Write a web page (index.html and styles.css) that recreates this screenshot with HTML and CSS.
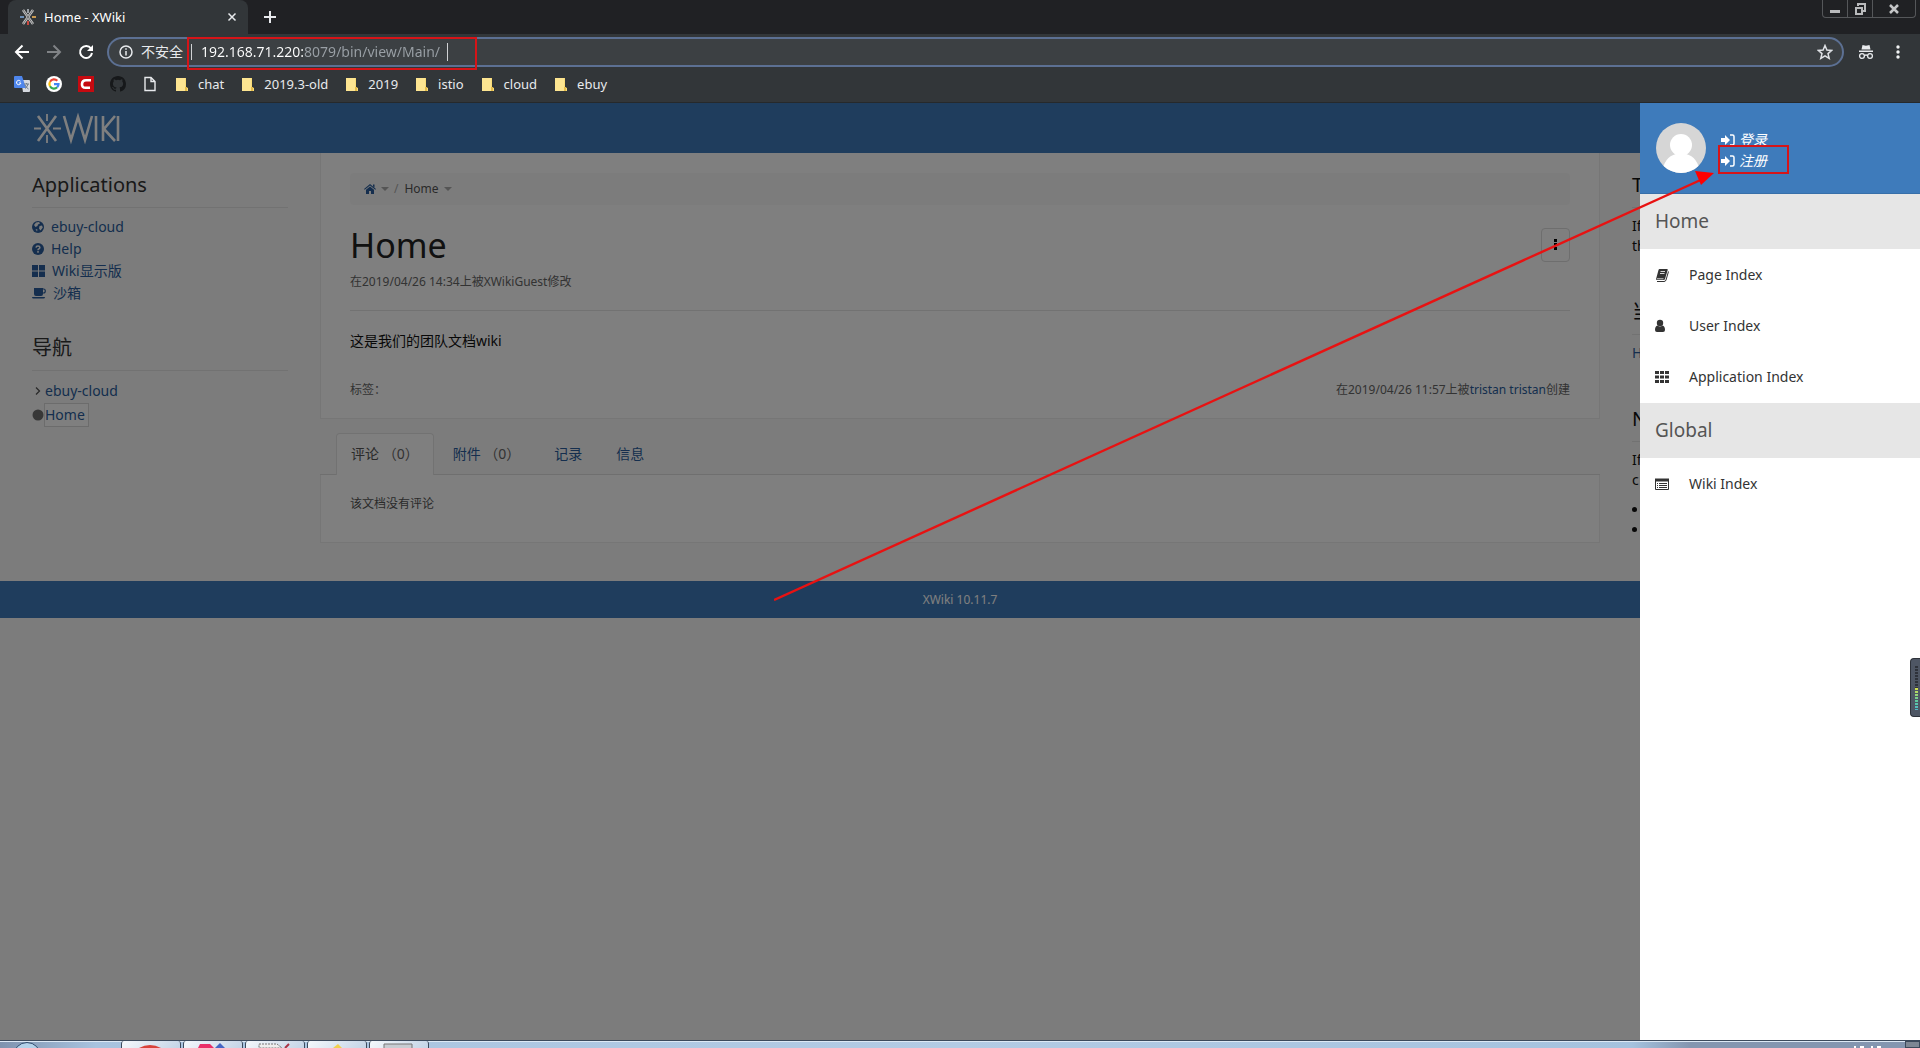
FILE: index.html
```html
<!DOCTYPE html>
<html lang="zh-CN">
<head>
<meta charset="utf-8">
<title>Home - XWiki</title>
<link rel="stylesheet" href="styles.css">
</head>
<body>
<svg class="sprite" aria-hidden="true">
  <symbol id="folder" viewBox="0 0 13 15"><path d="M1 1h10v9l2 1v3H1z" fill="#f9dc78"/><path d="M1 1h9v13H1z" fill="#fde591"/><path d="M10 10h2v4h-2z" fill="#e5bc4a"/></symbol>
  <symbol id="signin" viewBox="0 0 14 12"><path d="M0 4h4V1l5 5-5 5V8H0z" fill="currentColor"/><path d="M9 1h2.500q1.500 0 1.500 1.500v7q0 1.500-1.500 1.500H9" fill="none" stroke="currentColor" stroke-width="1.500"/></symbol>
</svg>

<header class="browser">
  <div class="tabstrip">
    <div class="tab">
      <svg class="favicon" viewBox="0 0 16 16" fill="none" stroke-width="2"><path d="M3 1l10 14M13 1L3 15" stroke="#c4c4c4" stroke-width="2.500"/><path d="M3 1l10 14M13 1L3 15" stroke="#55585b" stroke-width=".8"/><path d="M8 0v4" stroke="#9aa0a6"/><path d="M8 12v4" stroke="#c9483f"/><path d="M0 8h4" stroke="#6c8fb8"/><path d="M12 8h4" stroke="#c99a52"/></svg>
      <span class="tab-title">Home - XWiki</span>
      <button class="tab-close" aria-label="关闭"><svg viewBox="0 0 10 10" stroke="currentColor" stroke-width="1.500"><path d="M1.500 1.500l7 7m0-7l-7 7"/></svg></button>
    </div>
    <button class="new-tab" aria-label="新标签页"><svg viewBox="0 0 12 12" stroke="currentColor" stroke-width="2"><path d="M6 0v12M0 6h12"/></svg></button>
    <div class="window-buttons">
      <button aria-label="最小化"><svg viewBox="0 0 12 12"><path d="M1 7h10v3H1z" fill="#b9babc"/></svg></button>
      <button aria-label="还原"><svg viewBox="0 0 12 12" fill="none" stroke="#b9babc" stroke-width="2"><path d="M4 3V1h7v7H9"/><path d="M2 5h6v6H2z"/></svg></button>
      <button class="close" aria-label="关闭窗口"><svg viewBox="0 0 12 12" stroke="#c4c5c7" stroke-width="2.500"><path d="M2 2l8 8m0-8l-8 8"/></svg></button>
    </div>
  </div>

  <div class="toolbar">
    <button aria-label="后退"><svg viewBox="0 0 16 16" fill="none" stroke="#fff" stroke-width="2"><path d="M15 8H2m6.500-6.500L2 8l6.500 6.500"/></svg></button>
    <button aria-label="前进"><svg viewBox="0 0 16 16" fill="none" stroke="#808386" stroke-width="2"><path d="M1 8h13M7.500 1.500L14 8l-6.500 6.500"/></svg></button>
    <button aria-label="刷新"><svg viewBox="0 0 16 16"><path d="M13 4.500A6 6 0 1 0 14 9" fill="none" stroke="#fff" stroke-width="2"/><path d="M15 1v6H9z" fill="#fff"/></svg></button>
    <form class="omnibox">
      <svg class="info" viewBox="0 0 14 14" fill="none" stroke="#e8eaed" stroke-width="1.500"><circle cx="7" cy="7" r="6"/><path d="M7 6v4.500M7 3.300v1.500"/></svg>
      <label for="url">不安全</label>
      <div class="url">
        <input id="url" type="text" value="192.168.71.220:8079/bin/view/Main/" spellcheck="false">
        <i class="caret"></i>
      </div>
      <button type="button" aria-label="添加书签"><svg viewBox="0 0 16 16" fill="none" stroke="#dfe1e5" stroke-width="1.500"><path d="M8 1.500l1.900 4.500 4.800.4-3.700 3.200 1.200 4.800L8 11.800l-4.200 2.600L5 9.600 1.300 6.400 6.100 6z"/></svg></button>
    </form>
    <div class="toolbar-end">
      <svg viewBox="0 0 16 16"><path d="M4.500 1l3.500.7L11.500 1l1 4.500h-9z" fill="#e8eaed"/><path d="M1 6.500h14V8H1z" fill="#e8eaed"/><g fill="none" stroke="#e8eaed" stroke-width="1.300"><circle cx="4" cy="12" r="2.400"/><circle cx="12" cy="12" r="2.400"/><path d="M6.400 11.500q1.600-1 3.200 0"/></g></svg>
      <button aria-label="菜单"><svg viewBox="0 0 16 16" fill="#f1f3f4"><circle cx="8" cy="3" r="1.700"/><circle cx="8" cy="8" r="1.700"/><circle cx="8" cy="13" r="1.700"/></svg></button>
    </div>
  </div>

  <nav class="bookmarks">
    <a class="site" href="#" aria-label="翻译"><svg viewBox="0 0 16 16"><path d="M7 4h8q1 0 1 1v10q0 1-1 1H9z" fill="#d5d9df"/><path d="M1 0h7l4 12H1q-1 0-1-1V1q0-1 1-1z" fill="#4e86ec"/><path d="M6.500 5.200A2.200 2.200 0 1 0 6.900 7H5" fill="none" stroke="#fff"/><path d="M10 8h5m-2.500-1v1m1.500 0q-.5 3-3 4.500m0-3.500q1 2.500 3.500 4" fill="none" stroke="#6c7a89"/></svg></a>
    <a class="site" href="#" aria-label="搜索"><svg viewBox="0 0 16 16" fill="none" stroke-width="2.200"><circle cx="8" cy="8" r="8" fill="#fff"/><path d="M11.300 4.800A4.600 4.600 0 0 0 4 5.700" stroke="#ea4335"/><path d="M4 5.700a4.600 4.600 0 0 0 0 4.600" stroke="#fbbc05"/><path d="M4 10.300a4.600 4.600 0 0 0 7.200 1" stroke="#34a853"/><path d="M11.200 11.300A4.600 4.600 0 0 0 12.500 8.200H8" stroke="#4285f4"/></svg></a>
    <a class="site" href="#" aria-label="C"><svg viewBox="0 0 16 16"><path d="M0 0h16v16H0z" fill="#c60a10"/><path d="M13 4.200H8Q4.200 4.200 4 8T7.500 11.800H12" fill="none" stroke="#fff" stroke-width="2.600"/></svg></a>
    <a class="site" href="#" aria-label="代码"><svg viewBox="0 0 16 16"><path d="M8 0C3.580 0 0 3.580 0 8c0 3.540 2.290 6.530 5.470 7.590.4.070.55-.17.55-.38 0-.19-.01-.82-.01-1.490-2.010.37-2.530-.49-2.690-.94-.09-.23-.48-.94-.82-1.130-.28-.15-.68-.52-.01-.53.63-.01 1.080.58 1.230.82.72 1.210 1.870.87 2.330.66.07-.52.28-.87.51-1.070-1.780-.2-3.640-.89-3.640-3.950 0-.87.31-1.590.82-2.150-.08-.2-.36-1.020.08-2.120 0 0 .67-.21 2.200.82a7.600 7.600 0 0 1 4 0c1.530-1.040 2.200-.82 2.200-.82.44 1.100.16 1.920.08 2.120.51.56.82 1.270.82 2.150 0 3.070-1.870 3.750-3.650 3.950.29.25.54.73.54 1.480 0 1.070-.01 1.930-.01 2.200 0 .21.15.46.55.38A8 8 0 0 0 16 8c0-4.420-3.580-8-8-8z" fill="#16181a"/></svg></a>
    <a class="site" href="#" aria-label="文档"><svg viewBox="0 0 16 16" fill="none" stroke="#e8eaed" stroke-width="1.400"><path d="M3 1.500h6l4 4v9H3zM9 1.500v4h4"/></svg></a>
    <a class="dir" href="#"><svg><use href="#folder"/></svg>chat</a>
    <a class="dir" href="#"><svg><use href="#folder"/></svg>2019.3-old</a>
    <a class="dir" href="#"><svg><use href="#folder"/></svg>2019</a>
    <a class="dir" href="#"><svg><use href="#folder"/></svg>istio</a>
    <a class="dir" href="#"><svg><use href="#folder"/></svg>cloud</a>
    <a class="dir" href="#"><svg><use href="#folder"/></svg>ebuy</a>
  </nav>
</header>

<div class="viewport">
  <div class="wiki">
    <div class="navbar">
      <a href="#" aria-label="XWiki"><svg class="logo" viewBox="0 0 86 34" fill="none" stroke="#fff" stroke-width="2.600"><path d="M4 5l18 25M22 5L4 30"/><path d="M13 3v7M13 24v8M0 17.500h7M19 17.500h8" stroke-width="1.800"/><path d="M30 5l7 24 7-23 7 23 7-24M62 5v25M69 5v25M81 5L70 18l11 12M84 5v25"/></svg></a>
    </div>

    <div class="columns">
      <aside class="side">
        <h2>Applications</h2>
        <ul class="apps">
          <li><a href="#"><svg viewBox="0 0 12 12"><circle cx="6" cy="6" r="6" fill="currentColor"/><path d="M4 1.500l3-.5 1 1.500-2 1-.5 1.500L3.500 6 2 4zM7.500 5L10 4.500l.8 2L8.500 9.500 7 7.500zM3.500 8l2 .5-.5 2z" fill="#f8f8f8"/></svg>ebuy-cloud</a></li>
          <li><a href="#"><svg viewBox="0 0 12 12"><circle cx="6" cy="6" r="6" fill="currentColor"/><path d="M4 4.600Q4.200 3 6 3t1.900 1.500Q7.900 5.500 6.700 6 6 6.400 6 7.200M6 8v1.700" fill="none" stroke="#f8f8f8" stroke-width="1.500"/></svg>Help</a></li>
          <li><a href="#"><svg class="wide" viewBox="0 0 13 12"><path d="M0 0h6v5.500H0zM7 0h6v5.500H7zM0 6.500h6V12H0zM7 6.500h6V12H7z" fill="currentColor"/></svg>Wiki显示版</a></li>
          <li><a href="#"><svg class="cup" viewBox="0 0 14 12"><path d="M2 1h9v6q0 2-2 2H4Q2 9 2 7zM0 10h13q0 1.500-1.500 1.500h-10Q0 11.500 0 10z" fill="currentColor"/><path d="M11 2h.5q1.800 0 1.800 2t-1.800 2H11" fill="none" stroke="currentColor" stroke-width="1.200"/></svg>沙箱</a></li>
        </ul>
        <h2>导航</h2>
        <ul class="tree">
          <li><svg viewBox="0 0 12 12" fill="none" stroke="#555" stroke-width="1.300"><path d="M4 2.500L7.500 6 4 9.500"/></svg><a href="#">ebuy-cloud</a></li>
          <li><svg viewBox="0 0 12 12"><circle cx="6" cy="6" r="5.500" fill="#6e6e6e"/></svg><a class="current" href="#">Home</a></li>
        </ul>
      </aside>

      <main>
        <article class="document">
          <nav class="breadcrumb">
            <a href="#" aria-label="首页"><svg viewBox="0 0 12 12"><path d="M6 1l6 5-.7.800L6 2.400.7 6.800 0 6zM9 1.500h1.500v3L9 3.200zM6 3.400l4 3.300V11H7V8H5v3H2V6.700z" fill="currentColor"/></svg></a>
            <i class="down"></i><span class="slash">/</span><span>Home</span><i class="down"></i>
          </nav>
          <div class="title-row">
            <h1>Home</h1>
            <button class="more" aria-label="更多操作"><svg viewBox="0 0 4 12"><path d="M0 0h3v3H0zM0 4h3v3H0zM0 8h3v3H0z"/></svg></button>
          </div>
          <p class="meta">在2019/04/26 14:34上被XWikiGuest修改</p>
          <hr>
          <p class="text">这是我们的团队文档wiki</p>
          <div class="doc-foot">
            <span>标签：</span>
            <span>在2019/04/26 11:57上被<a href="#">tristan tristan</a>创建</span>
          </div>
        </article>

        <div class="doc-tabs">
          <a class="active" href="#">评论&nbsp;<span>（0）</span></a>
          <a href="#">附件&nbsp;<span>（0）</span></a>
          <a href="#">记录</a>
          <a href="#">信息</a>
        </div>
        <section class="pane">该文档没有评论</section>
      </main>

      <aside class="side tips">
        <h2>T</h2>
        <p>If<br>th</p>
        <h2>当</h2>
        <p><a href="#">H</a></p>
        <h2>N</h2>
        <p>If<br>c</p>
        <ul><li></li><li></li></ul>
      </aside>
    </div>

    <footer class="version">XWiki 10.11.7</footer>
    <div class="shade"></div>
  </div>

  <aside class="drawer">
    <div class="account">
      <svg class="avatar" viewBox="0 0 50 50"><clipPath id="round"><circle cx="25" cy="25" r="25"/></clipPath><g clip-path="url(#round)"><path d="M0 0h50v50H0z" fill="#d6d6d6"/><circle cx="25" cy="22" r="11" fill="#fff"/><path d="M6 50q2-16 14-19h10q12 3 14 19z" fill="#fff"/></g></svg>
      <div class="account-links">
        <a href="#"><svg><use href="#signin"/></svg>登录</a>
        <a class="marked" href="#"><svg><use href="#signin"/></svg>注册</a>
      </div>
    </div>
    <h3>Home</h3>
    <ul>
      <li><a href="#"><svg viewBox="0 0 14 14"><path d="M4.500 1H12q1 0 .7 1L10 11q-.3 1-1.300 1H2q-1.300 0-.8-1.500L3.500 2q.3-1 1-1z" fill="currentColor"/><path d="M5.500 3.500H10M5 5.500h4.500M2 10.800h6.500" stroke="#fff" stroke-width=".8"/><path d="M13.500 3.500L11 12q-.4 1.500-2 1.500H2" fill="none" stroke="currentColor"/></svg>Page Index</a></li>
      <li><a href="#"><svg viewBox="0 0 14 14"><circle cx="5" cy="4" r="3.200" fill="currentColor"/><path d="M2.500 6.500q2.500 2 5 0 2.500.5 2.500 4.500 0 2-2 2H2q-2 0-2-2 0-4 2.500-4.500z" fill="currentColor"/></svg>User Index</a></li>
      <li><a href="#"><svg viewBox="0 0 14 14" fill="currentColor"><path d="M0 1h4v3H0zM5 1h4v3H5zM10 1h4v3h-4zM0 5.500h4v3H0zM5 5.500h4v3H5zM10 5.500h4v3h-4zM0 10h4v3H0zM5 10h4v3H5zM10 10h4v3h-4z"/></svg>Application Index</a></li>
    </ul>
    <h3>Global</h3>
    <ul>
      <li><a href="#"><svg viewBox="0 0 14 14"><path d="M.5 2.500h13v10H.5z" fill="none" stroke="currentColor"/><path d="M0 1.500h14v3H0z" fill="currentColor"/><path d="M2 6.500h1m1 0h8M2 8.500h1m1 0h8M2 10.500h1m1 0h8" stroke="currentColor"/></svg>Wiki Index</a></li>
    </ul>
  </aside>
  <div class="meter"><i class="off"></i><i class="on"></i></div>
</div>

<div class="taskbar">
  <span class="start"></span>
  <span class="task"><svg viewBox="0 0 54 6"><path d="M15 6q11-6 22 0z" fill="#d8433b"/></svg></span>
  <span class="task"><svg viewBox="0 0 54 6"><path d="M14 2h10l4 4H12z" fill="#ea2f68"/><path d="M34 1l5 5H29z" fill="#4566c4"/></svg></span>
  <span class="task"><svg viewBox="0 0 54 6"><path d="M11 2h18l5 4H11z" fill="#eee" stroke="#777" stroke-dasharray="2 1"/><path d="M41 2l-4 4" stroke="#a34" stroke-width="2"/></svg></span>
  <span class="task"><svg viewBox="0 0 54 6"><path d="M23 6l5-4 4 4z" fill="#f1d04f"/></svg></span>
  <span class="task"><svg viewBox="0 0 54 6"><path d="M12 6V2h28v4" fill="#c8ccd2" stroke="#777"/></svg></span>
  <svg class="clock" viewBox="0 0 30 2" fill="#fff"><path d="M1 0h2v2H1zM7 0h4v2H7zM18 0h2v2h-2zM24 0h4v2h-4z"/></svg>
  <span class="desktop"></span>
</div>

<svg class="arrow" viewBox="0 0 940 430" aria-hidden="true"><path d="M0 429L931 7" stroke="#e81212" stroke-width="2.400"/><path d="M940 2L927 14l-6-14z" fill="#f00"/></svg>
</body>
</html>
```
FILE: styles.css
```css
* { box-sizing: border-box; }

body {
  margin: 0;
  min-height: 100vh;
  display: flex;
  flex-direction: column;
  position: relative;
  overflow: hidden;
  font: 14px/20px "Noto Sans", "Noto Sans CJK SC", sans-serif;
  color: #333;
}
a { color: #2a5d9c; text-decoration: none; }
button { border: 0; padding: 0; background: none; color: inherit; display: flex; align-items: center; justify-content: center; }
ul { list-style: none; margin: 0; padding: 0; }
h1, h2, h3, p { margin: 0; font-weight: 400; }
svg { display: block; flex: none; }
.sprite { position: absolute; width: 0; height: 0; }

/* Browser frame */
.browser { background: #323639; color: #e8eaed; font-size: 12px; border-bottom: 1px solid #26292b; }
.tabstrip { display: flex; height: 34px; background: #202124; padding-left: 8px; }
.tab { display: flex; align-items: center; width: 240px; padding: 0 11px 0 12px; background: #323639; border-radius: 8px 8px 0 0; }
.favicon { width: 16px; height: 16px; margin-right: 8px; }
.tab-title { flex: 1; color: #fff; font-size: 13px; }
.tab-close svg { width: 10px; height: 10px; }
.new-tab { width: 44px; }
.new-tab svg { width: 12px; height: 12px; }
.window-buttons { display: flex; height: 18px; margin: 0 4px 0 auto; border: 1px solid #55575a; border-top: 0; border-radius: 0 0 4px 4px; }
.window-buttons button { width: 25px; border-right: 1px solid #55575a; }
.window-buttons .close { width: 42px; border-right: 0; }
.window-buttons svg { width: 12px; height: 12px; }

.toolbar { display: flex; align-items: center; height: 36px; padding: 0 14px 0 6px; }
.toolbar > button { width: 32px; height: 32px; }
.toolbar svg { width: 16px; height: 16px; }
.omnibox { flex: 1; display: flex; align-items: center; height: 30px; margin-left: 5px; padding: 0 9px 0 10px; background: #3c4043; border: 2px solid #5c7093; border-radius: 15px; }
.omnibox .info { width: 14px; height: 14px; margin-right: 8px; }
.omnibox label { font-size: 14px; width: 44px; }
.url { position: relative; display: flex; align-items: center; flex: 1; margin-left: 6px; padding-left: 10px; }
.url::before { content: ""; width: 1px; height: 16px; position: absolute; left: 0; background: #d0d2d4; }
.url::after { content: ""; position: absolute; left: -4px; top: -5px; width: 286px; height: 29px; border: 2px solid #d61418; }
.url input {
  width: 246px; height: 20px; padding: 0; border: 0; outline: 0;
  font: 14px/20px "Noto Sans", sans-serif;
  color: transparent;
  background: linear-gradient(90deg, #fff 102px, #9aa0a6 102px);
  -webkit-background-clip: text;
  background-clip: text;
}
.caret { width: 1px; height: 18px; background: #d0d2d4; }
.toolbar-end { display: flex; gap: 16px; margin-left: 14px; }

.bookmarks { display: flex; align-items: flex-start; height: 32px; padding: 4px 14px 0; }
.bookmarks a { display: flex; align-items: center; height: 20px; color: #e8eaed; font-size: 13px; }
.site svg { width: 16px; height: 16px; }
.site { margin-right: 16px; }
.bookmarks .dir { gap: 10px; margin: 0 16px 0 1px; }
.dir svg { width: 13px; height: 15px; }

/* Wiki page */
.viewport { flex: 1; display: flex; position: relative; background: #fff; }
.wiki { flex: 1; position: relative; background: #f8f8f8; }
.shade { position: absolute; inset: 0; background: rgba(0, 0, 0, .5); }
.navbar { height: 50px; padding: 8px 34px; background: #3e7bbb; }
.logo { width: 86px; height: 34px; }
.columns { display: grid; grid-template-columns: 2fr 8fr 2fr; }

.side { padding: 18px 32px 0; }
.side h2 { font-size: 20px; line-height: 28px; padding-bottom: 8px; border-bottom: 1px solid #e4e4e4; margin-bottom: 8px; }
.side ul + h2 { margin-top: 30px; }
.apps { line-height: 22px; }
.apps a { display: flex; align-items: center; gap: 7px; }
.apps svg { width: 12px; height: 12px; }
.apps .wide { width: 13px; }
.apps .cup { width: 14px; }
.tree li { display: flex; align-items: center; height: 24px; }
.tree svg { width: 12px; height: 12px; }
.tree a { padding: 0 3px 0 0; line-height: 22px; border: 1px solid transparent; }
.tree .current { background: #fff; border-color: #d8d8d8; }
.tips { padding-right: 0; color: #111; }
.tips p + h2 { margin-top: 42px; }
.tips ul { list-style: disc inside; margin-top: 10px; }

.document, .pane { background: #fff; border: 1px solid #ececec; border-top: 0; }
.document { padding: 20px 29px 18px; }
.breadcrumb { display: flex; align-items: center; height: 32px; padding: 0 14px; background: #f9f9f9; border-radius: 4px; font-size: 12px; color: #555; }
.breadcrumb svg { width: 12px; height: 12px; }
.down { margin: 0 5px; border: 4px solid transparent; border-top-color: #aaa; border-bottom: 0; }
.slash { color: #aaa; margin-right: 6px; }
.title-row { display: flex; align-items: center; justify-content: space-between; margin-top: 20px; }
h1 { font-size: 34px; line-height: 40px; color: #222; }
.more { width: 29px; height: 34px; border: 1px solid #dcdcdc; border-radius: 4px; }
.more svg { width: 4px; height: 12px; }
.meta { margin-top: 7px; font-size: 12px; color: #666; }
hr { margin: 18px 0 20px; border: 0; border-top: 1px solid #e4e4e4; }
.text { color: #111; }
.doc-foot { display: flex; justify-content: space-between; margin-top: 29px; font-size: 12px; color: #666; }

.doc-tabs { display: flex; gap: 4px; margin-top: 14px; padding-left: 16px; border-bottom: 1px solid #dedede; }
.doc-tabs a { padding: 10px 14px; border: 1px solid transparent; border-bottom: 0; }
.doc-tabs span { color: #666; }
.doc-tabs .active { margin-bottom: -1px; padding-bottom: 11px; color: #555; background: #fff; border-color: #e4e4e4; border-radius: 4px 4px 0 0; }
.pane { padding: 19px 29px 28px; font-size: 12px; color: #555; }
.version { margin-top: 38px; height: 37px; line-height: 37px; text-align: center; font-size: 12px; color: #fff; background: #3e7bbb; }

/* Drawer */
.drawer { position: absolute; top: 0; bottom: 0; right: 0; width: 280px; background: #fff; }
.account { display: flex; gap: 15px; height: 91px; padding: 20px 16px; background: #3e7bbb; border-bottom: 1px solid #376fa9; }
.avatar { width: 50px; height: 50px; }
.account-links { padding-top: 6px; }
.account-links a { position: relative; display: flex; align-items: center; gap: 4px; line-height: 21px; color: #fff; font-style: italic; }
.account-links svg { width: 14px; height: 12px; }
.marked::after { content: ""; position: absolute; left: -3px; top: -5px; width: 67px; height: 25px; border: 2px solid #d61418; }
.drawer h3 { height: 55px; padding: 0 15px; font-size: 19px; line-height: 55px; color: #555; background: #e6e6e6; }
.drawer ul { padding-bottom: 1px; }
.drawer li a { display: flex; align-items: center; gap: 20px; padding: 15px; line-height: 21px; color: #333; }
.drawer li svg { width: 14px; height: 14px; }

.meter { position: absolute; right: 0; top: 555px; width: 10px; height: 59px; padding: 7px 2px 7px 4px; background: #4e5664; border: 1px solid #2e323a; border-right: 0; border-radius: 4px 0 0 4px; }
.meter i { display: block; height: 22px; }
.meter .off { background: repeating-linear-gradient(#2e323a 0 2px, #4e5664 2px 3px); }
.meter .on { background: repeating-linear-gradient(transparent 0 2px, #4e5664 2px 3px), linear-gradient(#d6e04a, #5cc8a0 60%, #4fb8c8); }

/* Desktop taskbar, only its top edge shows */
.taskbar { display: flex; height: 8px; overflow: hidden; border-top: 1px solid #3c4a5c; background: linear-gradient(90deg, #7f93af, #a8c3df 5%, #b3cbe4 50%, #a5c2de 85%, #8496b0 88%); box-shadow: inset 0 1px #dde9f5; }
.start { width: 28px; height: 28px; margin: 1px 80px 0 13px; border: 1px solid #2f4a6b; border-radius: 50%; background: #b4d2ea; }
.task { width: 60px; margin-right: 2px; background: linear-gradient(135deg, #f4f8fc, #c4d4e6); border: 1px solid #3c4a5c; border-width: 0 1px; border-radius: 3px 3px 0 0; }
.task svg { width: 54px; height: 6px; margin: 1px auto 0; }
.clock { width: 30px; height: 2px; margin: 5px 22px 0 auto; }
.desktop { width: 15px; border: 1px solid #3c4a5c; background: #7d8794; }

.arrow { position: absolute; left: 774px; top: 171px; width: 940px; height: 430px; pointer-events: none; }
```
